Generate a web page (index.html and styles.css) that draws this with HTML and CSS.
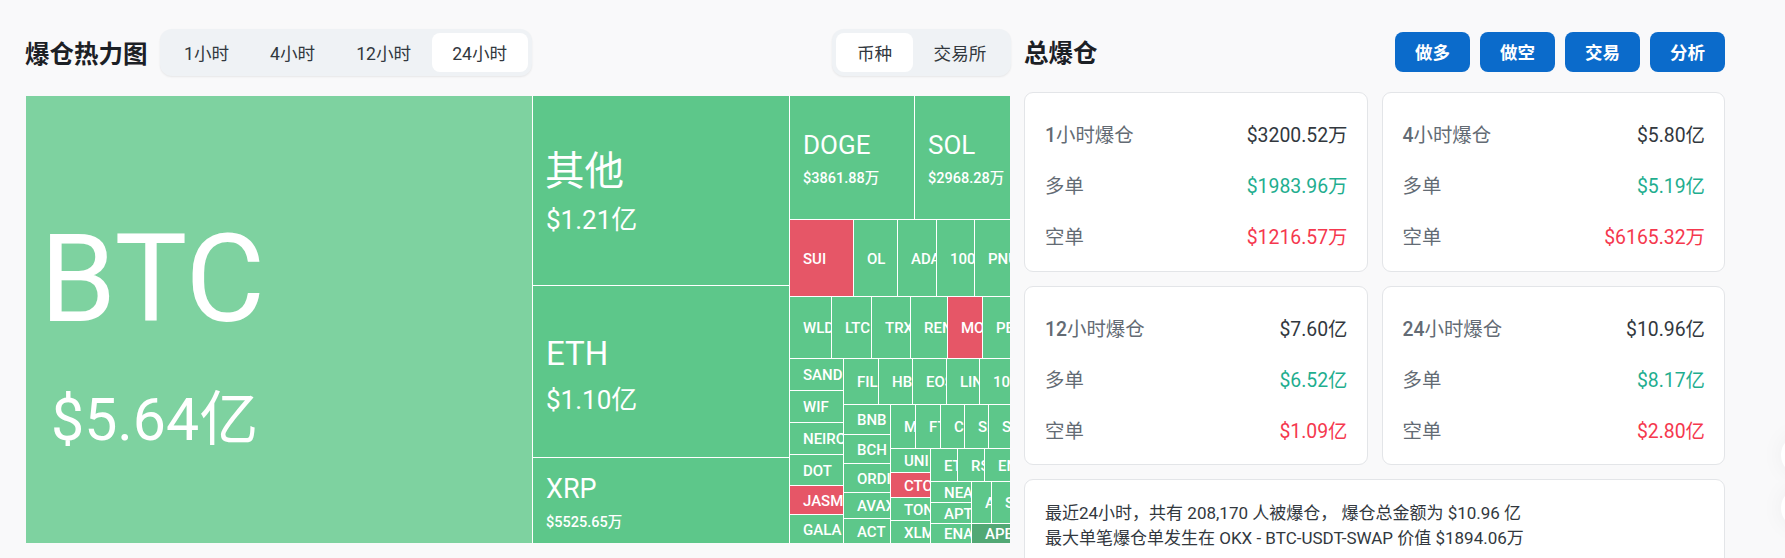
FILE: index.html
```html
<!DOCTYPE html>
<html lang="zh-CN">
<head>
    <meta charset="UTF-8">
    <meta name="viewport" content="width=device-width, initial-scale=1.0">
    <title>爆仓热力图</title>
    <link rel="stylesheet" href="styles.css">
</head>
<body>
    <div class="page">
        <!-- 左侧:热力图 -->
        <section class="left-panel">
            <div class="left-head">
                <h2 class="panel-title title-left">爆仓热力图</h2>
                <div class="seg">
                    <button class="seg-btn">1小时</button>
                    <button class="seg-btn">4小时</button>
                    <button class="seg-btn">12小时</button>
                    <button class="seg-btn active">24小时</button>
                </div>
                <div class="seg seg-right">
                    <button class="seg-btn seg-wide active">币种</button>
                    <button class="seg-btn seg-wide">交易所</button>
                </div>
            </div>

            <!-- 尺寸来自数据,所以用行内样式 -->
            <div class="treemap">
                <div class="tile tile-btc" style="flex:0 0 506px">
                    <span class="t-name">BTC</span>
                    <span class="t-val">$5.64亿</span>
                </div>
                <div class="col" style="flex:0 0 256px">
                    <div class="tile tile-other" style="flex:0 0 189px"><span class="t-name">其他</span><span class="t-val">$1.21亿</span></div>
                    <div class="tile tile-eth" style="flex:0 0 171px"><span class="t-name">ETH</span><span class="t-val">$1.10亿</span></div>
                    <div class="tile tile-xrp" style="flex:0 0 85px"><span class="t-name">XRP</span><span class="t-val">$5525.65万</span></div>
                </div>
                <div class="col" style="flex:0 0 220px">
                    <div class="row" style="flex:0 0 123px">
                        <div class="tile tile-mid" style="flex:0 0 124px"><span class="t-name">DOGE</span><span class="t-val">$3861.88万</span></div>
                        <div class="tile tile-mid" style="flex:0 0 95px"><span class="t-name">SOL</span><span class="t-val">$2968.28万</span></div>
                    </div>
                    <div class="row" style="flex:0 0 76px">
                        <div class="tile red" style="flex:0 0 63px">SUI</div>
                        <div class="tile" style="flex:0 0 43px">OL</div>
                        <div class="tile" style="flex:0 0 38px">ADA</div>
                        <div class="tile" style="flex:0 0 37px">1000PEPE</div>
                        <div class="tile" style="flex:0 0 35px">PNUT</div>
                    </div>
                    <div class="row" style="flex:0 0 61px">
                        <div class="tile" style="flex:0 0 41px">WLD</div>
                        <div class="tile" style="flex:0 0 39px">LTC</div>
                        <div class="tile" style="flex:0 0 38px">TRX</div>
                        <div class="tile" style="flex:0 0 36px">RENDER</div>
                        <div class="tile red" style="flex:0 0 34px">MOODENG</div>
                        <div class="tile" style="flex:0 0 27px">PEPE</div>
                    </div>
                    <div class="row" style="flex:0 0 184px">
                        <div class="col" style="flex:0 0 53px">
                            <div class="tile" style="flex:0 0 31px">SAND</div>
                            <div class="tile" style="flex:0 0 31px">WIF</div>
                            <div class="tile" style="flex:0 0 31px">NEIRO</div>
                            <div class="tile" style="flex:0 0 30px">DOT</div>
                            <div class="tile red" style="flex:0 0 28px">JASMY</div>
                            <div class="tile" style="flex:0 0 28px">GALA</div>
                        </div>
                        <div class="col" style="flex:0 0 166px">
                            <div class="row" style="flex:0 0 45px">
                                <div class="tile" style="flex:0 0 34px">FIL</div>
                                <div class="tile" style="flex:0 0 33px">HBAR</div>
                                <div class="tile" style="flex:0 0 33px">EOS</div>
                                <div class="tile" style="flex:0 0 32px">LINK</div>
                                <div class="tile" style="flex:0 0 30px">1000X</div>
                            </div>
                            <div class="row" style="flex:0 0 138px">
                                <div class="col" style="flex:0 0 46px">
                                    <div class="tile" style="flex:0 0 29px">BNB</div>
                                    <div class="tile" style="flex:0 0 28px">BCH</div>
                                    <div class="tile" style="flex:0 0 28px">ORDI</div>
                                    <div class="tile" style="flex:0 0 25px">AVAX</div>
                                    <div class="tile" style="flex:0 0 24px">ACT</div>
                                </div>
                                <div class="col" style="flex:0 0 119px">
                                    <div class="row" style="flex:0 0 43px">
                                        <div class="tile" style="flex:0 0 24px">MEME</div>
                                        <div class="tile" style="flex:0 0 24px">FTM</div>
                                        <div class="tile" style="flex:0 0 23px">CRV</div>
                                        <div class="tile" style="flex:0 0 23px">SEI</div>
                                        <div class="tile" style="flex:0 0 21px">STX</div>
                                    </div>
                                    <div class="row" style="flex:0 0 94px">
                                        <div class="col" style="flex:0 0 39px">
                                            <div class="tile" style="flex:0 0 23px">UNI</div>
                                            <div class="tile red" style="flex:0 0 24px">CTC</div>
                                            <div class="tile" style="flex:0 0 22px">TON</div>
                                            <div class="tile" style="flex:0 0 22px">XLM</div>
                                        </div>
                                        <div class="col" style="flex:0 0 79px">
                                            <div class="row" style="flex:0 0 32px">
                                                <div class="tile" style="flex:0 0 26px">ETC</div>
                                                <div class="tile" style="flex:0 0 26px">RSR</div>
                                                <div class="tile" style="flex:0 0 25px">ENS</div>
                                            </div>
                                            <div class="row" style="flex:0 0 61px">
                                                <div class="col" style="flex:0 0 40px">
                                                    <div class="tile" style="flex:0 0 20px">NEAR</div>
                                                    <div class="tile" style="flex:0 0 20px">APT</div>
                                                    <div class="tile" style="flex:0 0 19px">ENA</div>
                                                </div>
                                                <div class="col" style="flex:0 0 38px">
                                                    <div class="row" style="flex:0 0 41px">
                                                        <div class="tile" style="flex:0 0 19px">ARB</div>
                                                        <div class="tile" style="flex:0 0 18px">SHIB</div>
                                                    </div>
                                                    <div class="tile dark" style="flex:0 0 19px">APE</div>
                                                </div>
                                            </div>
                                        </div>
                                    </div>
                                </div>
                            </div>
                        </div>
                    </div>
                </div>
            </div>
        </section>

        <!-- 右侧:总爆仓 -->
        <section class="right-panel">
            <div class="right-head">
                <h2 class="panel-title">总爆仓</h2>
                <div class="actions">
                    <button class="action-btn">做多</button>
                    <button class="action-btn">做空</button>
                    <button class="action-btn">交易</button>
                    <button class="action-btn">分析</button>
                </div>
            </div>

            <div class="cards">
                <div class="card">
                    <div class="stat"><span class="stat-label"><b>1</b>小时爆仓</span><span class="stat-val">$3200.52万</span></div>
                    <div class="stat"><span class="stat-label">多单</span><span class="stat-val up">$1983.96万</span></div>
                    <div class="stat"><span class="stat-label">空单</span><span class="stat-val down">$1216.57万</span></div>
                </div>
                <div class="card">
                    <div class="stat"><span class="stat-label"><b>4</b>小时爆仓</span><span class="stat-val">$5.80亿</span></div>
                    <div class="stat"><span class="stat-label">多单</span><span class="stat-val up">$5.19亿</span></div>
                    <div class="stat"><span class="stat-label">空单</span><span class="stat-val down">$6165.32万</span></div>
                </div>
                <div class="card">
                    <div class="stat"><span class="stat-label"><b>12</b>小时爆仓</span><span class="stat-val">$7.60亿</span></div>
                    <div class="stat"><span class="stat-label">多单</span><span class="stat-val up">$6.52亿</span></div>
                    <div class="stat"><span class="stat-label">空单</span><span class="stat-val down">$1.09亿</span></div>
                </div>
                <div class="card">
                    <div class="stat"><span class="stat-label"><b>24</b>小时爆仓</span><span class="stat-val">$10.96亿</span></div>
                    <div class="stat"><span class="stat-label">多单</span><span class="stat-val up">$8.17亿</span></div>
                    <div class="stat"><span class="stat-label">空单</span><span class="stat-val down">$2.80亿</span></div>
                </div>
            </div>

            <div class="summary">
                <p>最近24小时，共有 208,170 人被爆仓， 爆仓总金额为 $10.96 亿</p>
                <p>最大单笔爆仓单发生在 OKX - BTC-USDT-SWAP 价值 $1894.06万</p>
            </div>
        </section>
    </div>

    <!-- 右边缘的悬浮按钮 -->
    <div class="float-btn float-a"></div>
    <div class="float-btn float-b"></div>
</body>
</html>
```

FILE: styles.css
```css
* {
    box-sizing: border-box;
}
html, body {
    height: 100%;
    overflow: hidden;
}
body {
    margin: 0;
    background-color: #f9f9fa;
    font-family: Roboto, "Noto Sans CJK SC", sans-serif;
    color: #1c2025;
}
.page {
    display: flex;
    gap: 14px;
    padding: 29px 0 0 26px;
}

/* 左侧 */
.left-panel {
    width: 984px;
    flex: none;
}
.left-head {
    display: flex;
    align-items: center;
    height: 47px;
    margin-bottom: 20px;
}
.panel-title {
    margin: 0;
    padding-top: 4px;
    font-size: 24.5px;
    font-weight: 700;
    line-height: 32px;
}
.title-left {
    margin-left: -1px;
}
.seg {
    display: flex;
    margin-left: 12px;
    padding: 4px;
    background-color: #eff2f5;
    border-radius: 12px;
    box-shadow: 0 1px 2px rgba(0,0,0,0.08);
}
.seg-right {
    margin-left: auto;
    margin-right: -1px;
}
.seg-btn {
    padding: 0 20.5px;
    height: 39px;
    background: none;
    border: none;
    border-radius: 8px;
    font-family: inherit;
    font-size: 17.6px;
    color: #32383e;
}
.seg-btn.active {
    background-color: #ffffff;
}
.seg-wide {
    width: 77px;
    padding: 0;
}
.seg-wide + .seg-wide {
    width: 94px;
}

/* 热力图 */
.treemap {
    display: flex;
    gap: 1px;
    height: 447px;
    background-color: #ffffff;
}
.row, .col {
    display: flex;
    gap: 1px;
    min-width: 0;
    min-height: 0;
}
.col {
    flex-direction: column;
}
.tile {
    display: flex;
    flex-direction: column;
    justify-content: center;
    align-items: flex-start;
    padding: 1px 0 0 13px;
    overflow: hidden;
    background-color: #5dc78a;
    color: #ffffff;
    font-size: 15px;
    font-weight: 500;
    white-space: nowrap;
    line-height: 1.2;
}
.tile.red {
    background-color: #e65667;
}
.tile.dark {
    background-color: #52a875;
}
.t-name, .t-val {
    font-weight: 400;
}
.tile-btc {
    background-color: #7ed2a0;
    padding-left: 14px;
    padding-top: 25px;
}
.tile-btc .t-name {
    font-size: 122px;
    line-height: 140px;
}
.tile-btc .t-val {
    margin-top: 35px;
    margin-left: 11px;
    font-size: 59px;
    line-height: 70px;
}
.tile-other {
    padding-top: 2px;
}
.tile-other .t-name {
    margin-left: -1px;
    font-size: 39.5px;
    line-height: 50px;
}
.tile-other .t-val {
    margin-top: 7px;
}
.tile-other .t-val, .tile-eth .t-val {
    font-size: 26px;
    line-height: 32px;
}
.tile-eth {
    padding-top: 7px;
}
.tile-eth .t-name {
    font-size: 33px;
    line-height: 40px;
}
.tile-eth .t-val {
    margin-top: 10px;
}
.tile-xrp {
    padding-top: 4px;
}
.tile-xrp .t-name {
    font-size: 27px;
    line-height: 34px;
}
.tile-xrp .t-val {
    margin-top: 7px;
}
.tile-xrp .t-val, .tile-mid .t-val {
    font-size: 14.5px;
    font-weight: 500;
    line-height: 20px;
}
.tile-mid {
    padding-top: 3px;
}
.tile-mid .t-name {
    font-size: 26px;
    line-height: 32px;
}
.tile-mid .t-val {
    margin-top: 8px;
}

/* 右侧 */
.right-panel {
    width: 701px;
    flex: none;
}
.right-head {
    display: flex;
    justify-content: space-between;
    align-items: center;
    height: 47px;
    margin-top: -1px;
    margin-bottom: 17px;
}
.actions {
    display: flex;
    gap: 10px;
}
.action-btn {
    width: 75px;
    height: 40px;
    background-color: #0b6bcb;
    color: #ffffff;
    border: none;
    border-radius: 8px;
    font-family: inherit;
    font-size: 17.5px;
    font-weight: 700;
}
.cards {
    display: grid;
    grid-template-columns: 343.5px 343.5px;
    grid-auto-rows: 179.5px;
    gap: 14px;
}
.card {
    display: flex;
    flex-direction: column;
    justify-content: center;
    padding: 6px 19px 0 20px;
    background-color: #ffffff;
    border: 1px solid #e3e5e8;
    border-radius: 9px;
}
.stat {
    display: flex;
    justify-content: space-between;
    align-items: center;
    height: 51px;
    font-size: 19.4px;
}
.stat-label {
    color: #636b74;
}
.stat-label b {
    font-weight: 500;
}
.stat-val {
    color: #32383e;
}
.stat-val.up {
    color: #1fae8f;
}
.stat-val.down {
    color: #f5384e;
}
.summary {
    margin-top: 14px;
    height: 150px;
    padding: 21px 20px;
    background-color: #ffffff;
    border: 1px solid #e3e5e8;
    border-radius: 9px;
    font-size: 17px;
    line-height: 25px;
    color: #32383e;
}
.summary p {
    margin: 0;
}

.float-btn {
    position: fixed;
    width: 40px;
    height: 40px;
    right: -36px;
    border-radius: 50%;
    background-color: #ffffff;
    box-shadow: 0 0 24px rgba(0,0,0,0.05);
}
.float-a {
    top: 435px;
}
.float-b {
    top: 488px;
}
```
